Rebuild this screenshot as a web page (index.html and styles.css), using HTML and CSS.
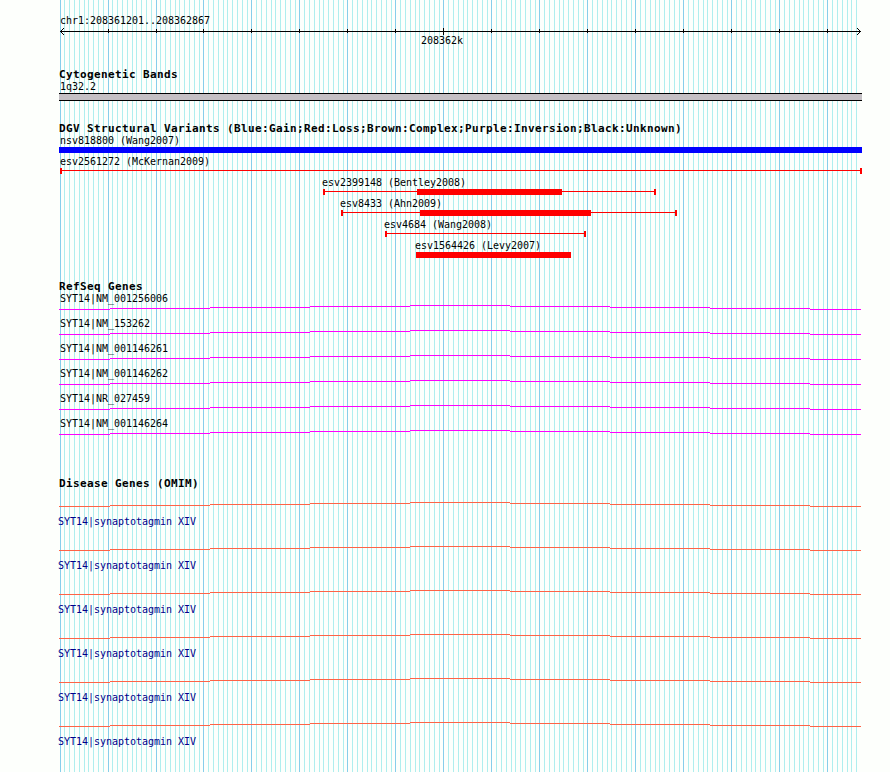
FILE: index.html
```html
<!DOCTYPE html>
<html lang="en">
  <head>
    <meta charset="UTF-8" />
    <title>chr1:208361201..208362867</title>
    <link rel="stylesheet" href="styles.css">
  </head>
  <body>
    <!-- shared intron line -->
    <svg class="defs" width="0" height="0">
      <symbol id="intron" viewBox="0 0 803 5">
        <path d="M0 4.5H51M51 3.5H151M151 2.5H251M251 1.5H351M351 .5H451M451 1.5H551M551 2.5H651M651 3.5H751M751 4.5H802" />
      </symbol>
    </svg>

    <div class="panel">
      <svg class="grid" id="grid"></svg>

      <section class="ruler">
        <div class="label">chr1:208361201..208362867</div>
        <svg class="scale" id="scale" width="803" height="8">
          <path d="M1 4.5H802M2 3.5H3M3 2.5H4M4 1.5H5M2 5.5H3M3 6.5H4M4 7.5H5M800 3.5H801M799 2.5H800M798 1.5H799M800 5.5H801M799 6.5H800M798 7.5H799" />
        </svg>
        <div class="label tick-label">208362k</div>
      </section>

      <section class="track bands">
        <h2>Cytogenetic Bands</h2>
        <div class="label">1q32.2</div>
        <div class="band"></div>
      </section>

      <section class="track variants">
        <h2>DGV Structural Variants (Blue:Gain;Red:Loss;Brown:Complex;Purple:Inversion;Black:Unknown)</h2>
        <div class="variant">
          <div class="label">nsv818800 (Wang2007)</div>
          <svg width="803" height="6"><rect class="gain" width="803" height="6" /></svg>
        </div>
        <div class="variant">
          <div class="label">esv2561272 (McKernan2009)</div>
          <svg width="803" height="6"><path class="loss" d="M1 0h2v6h-2zM801 0h2v6h-2zM1 2h801v1H1z" /></svg>
        </div>
        <div class="variant bentley">
          <div class="label">esv2399148 (Bentley2008)</div>
          <svg width="803" height="6"><path class="loss" d="M264 0h2v6h-2zM595 0h2v6h-2zM264 2h332v1H264zM358 0h145v6H358z" /></svg>
        </div>
        <div class="variant ahn">
          <div class="label">esv8433 (Ahn2009)</div>
          <svg width="803" height="6"><path class="loss" d="M282 0h2v6h-2zM616 0h2v6h-2zM282 2h335v1H282zM361 0h171v6H361z" /></svg>
        </div>
        <div class="variant wang">
          <div class="label">esv4684 (Wang2008)</div>
          <svg width="803" height="6"><path class="loss" d="M326 0h2v6h-2zM525 0h2v6h-2zM326 2h200v1H326z" /></svg>
        </div>
        <div class="variant levy">
          <div class="label">esv1564426 (Levy2007)</div>
          <svg width="803" height="6"><rect class="loss" x="357" width="155" height="6" /></svg>
        </div>
      </section>

      <section class="track refseq">
        <h2>RefSeq Genes</h2>
        <div class="gene">
          <div class="label">SYT14|NM_001256006</div>
          <svg width="803" height="5"><use href="#intron" /></svg>
        </div>
        <div class="gene">
          <div class="label">SYT14|NM_153262</div>
          <svg width="803" height="5"><use href="#intron" /></svg>
        </div>
        <div class="gene">
          <div class="label">SYT14|NM_001146261</div>
          <svg width="803" height="5"><use href="#intron" /></svg>
        </div>
        <div class="gene">
          <div class="label">SYT14|NM_001146262</div>
          <svg width="803" height="5"><use href="#intron" /></svg>
        </div>
        <div class="gene">
          <div class="label">SYT14|NR_027459</div>
          <svg width="803" height="5"><use href="#intron" /></svg>
        </div>
        <div class="gene">
          <div class="label">SYT14|NM_001146264</div>
          <svg width="803" height="5"><use href="#intron" /></svg>
        </div>
      </section>

      <section class="track omim">
        <h2>Disease Genes (OMIM)</h2>
        <div class="disease">
          <svg width="803" height="5"><use href="#intron" /></svg>
          <div class="label">SYT14|synaptotagmin XIV</div>
        </div>
        <div class="disease">
          <svg width="803" height="5"><use href="#intron" /></svg>
          <div class="label">SYT14|synaptotagmin XIV</div>
        </div>
        <div class="disease">
          <svg width="803" height="5"><use href="#intron" /></svg>
          <div class="label">SYT14|synaptotagmin XIV</div>
        </div>
        <div class="disease">
          <svg width="803" height="5"><use href="#intron" /></svg>
          <div class="label">SYT14|synaptotagmin XIV</div>
        </div>
        <div class="disease">
          <svg width="803" height="5"><use href="#intron" /></svg>
          <div class="label">SYT14|synaptotagmin XIV</div>
        </div>
        <div class="disease">
          <svg width="803" height="5"><use href="#intron" /></svg>
          <div class="label">SYT14|synaptotagmin XIV</div>
        </div>
      </section>
    </div>

    <script>
      const grid = document.getElementById("grid");
      const scale = document.getElementById("scale");
      const step = 8000 / 1667; // pixels per 10 bp

      function addLine(parent, x, y, height, name) {
        const rect = document.createElementNS("http://www.w3.org/2000/svg", "rect");
        rect.setAttribute("x", x);
        rect.setAttribute("y", y);
        rect.setAttribute("width", 1);
        rect.setAttribute("height", height);
        rect.setAttribute("class", name);
        parent.appendChild(rect);
      }

      for (let i = 0; i <= 166; i++) {
        const x = Math.floor(1.02 + i * step);
        const major = i % 10 === 0;
        addLine(grid, x, 0, 772, major ? "major" : "minor");
        if (major && i > 0) {
          // longer tick at 208362k
          addLine(scale, x, i === 80 ? 1 : 2, i === 80 ? 7 : 4, "tick");
        }
      }
    </script>
  </body>
</html>
```
FILE: styles.css
```css
* {
  padding: 0;
  margin: 0;
  box-sizing: border-box;
}

body {
  background: #fdfffc;
  color: #000;
  font-family: "DejaVu Sans Mono", monospace;
  overflow: hidden;
}

svg {
  display: block;
  shape-rendering: crispEdges;
}

.defs {
  height: 0;
}

.panel {
  position: relative;
  width: 803px;
  height: 772px;
  margin-left: 59px;
}

/* Grid lines behind all the tracks */
.grid {
  position: absolute;
  top: 0;
  left: 0;
  width: 803px;
  height: 772px;
  z-index: -1;
}

.minor {
  fill: #afeeee;
}

.major {
  fill: #87ceeb;
}

.label {
  height: 12px;
  padding-left: 1px;
  font-size: 10px;
  line-height: 12px;
  letter-spacing: -0.02px;
  white-space: pre;
}

h2 {
  height: 13px;
  font-size: 11px;
  line-height: 13px;
  letter-spacing: 0.378px;
  white-space: pre;
}

/* Ruler */
.ruler {
  padding-top: 15px;
}

.scale path {
  stroke: #000;
}

.tick-label {
  padding-left: 362px;
}

.track {
  margin-top: 21px;
}

.band {
  height: 8px;
  background: #c4c0c4;
  border-top: 1px solid #000;
  border-bottom: 1px solid #000;
}

/* Structural variants */
.variants {
  display: grid;
}

.variant + .variant {
  margin-top: 3px;
}

.gain {
  fill: #00f;
}

.loss {
  fill: #f00;
}

.bentley .label {
  padding-left: 263px;
}

.ahn .label {
  padding-left: 281px;
}

.wang .label {
  padding-left: 325px;
}

.levy .label {
  padding-left: 356px;
}

/* Genes */
.refseq {
  margin-top: 22px;
  stroke: #f0f;
}

.refseq h2,
.refseq .label {
  stroke: none;
}

.gene + .gene {
  margin-top: 8px;
}

/* Disease genes */
.omim {
  margin-top: 42px;
  stroke: #ff6347;
}

.disease {
  margin-top: 18px;
}

h2 + .disease {
  margin-top: 12px;
}

.disease .label {
  margin-top: 9px;
  margin-left: -1px;
  padding-left: 0;
  color: #00008b;
}
```
